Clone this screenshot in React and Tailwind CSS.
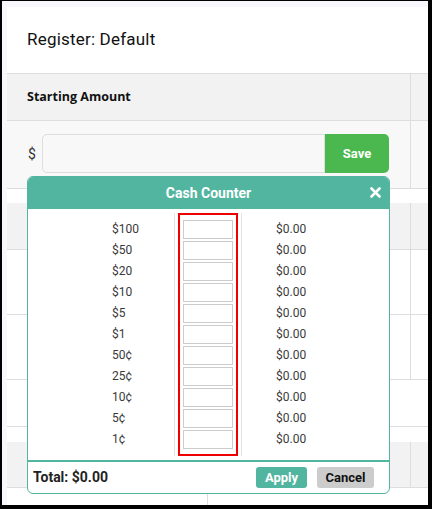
import React from 'react';

const denominations = ['$100', '$50', '$20', '$10', '$5', '$1', '50¢', '25¢', '10¢', '5¢', '1¢'];

function TableRow({ className = '', children, right = true }) {
  return (
    <div className={`flex border-b border-[#dddddd] ${className}`}>
      <div className="w-[403px] flex items-center">{children}</div>
      {right && <div className="w-px bg-[#dddddd]" />}
      <div className="flex-1" />
    </div>
  );
}

function CashCounter() {
  return (
    <div className="absolute left-[25px] top-[175px] w-[363px] h-[318px] flex flex-col rounded-[6px] border border-[#52b5a0] bg-white overflow-hidden">
      {/* header */}
      <div className="relative h-[32px] shrink-0 bg-[#52b5a0] flex items-center justify-center">
        <span className="text-white text-[14px] font-bold">Cash Counter</span>
        <svg className="absolute right-[8px] top-[10px]" width="11" height="11" viewBox="0 0 11 11">
          <path d="M1.5 1.5 L9.5 9.5 M9.5 1.5 L1.5 9.5" stroke="white" strokeWidth="2.6" strokeLinecap="round" />
        </svg>
      </div>

      {/* body */}
      <div className="grid grid-cols-[146px_68px_1fr] pt-[4px] pb-[4px]">
        <div className="pt-[7px] pl-[84px] flex flex-col">
          {denominations.map((d) => (
            <div key={d} className="h-[21px] leading-[19px] text-[12px] text-[#3a3a3a]">{d}</div>
          ))}
        </div>
        <div className="border-l border-r border-[#e2e2e2] px-[3px]">
          <div className="border-2 border-[#ee0000] pt-[5px] pb-[5px] px-[3px] flex flex-col gap-[2px]">
            {denominations.map((d) => (
              <input
                key={d}
                type="text"
                className="w-[50px] h-[19px] border border-[#cccccc] bg-white outline-none"
              />
            ))}
          </div>
        </div>
        <div className="pt-[7px] pl-[34px] flex flex-col">
          {denominations.map((d) => (
            <div key={d} className="h-[21px] leading-[19px] text-[12px] text-[#3a3a3a]">$0.00</div>
          ))}
        </div>
      </div>

      {/* footer */}
      <div className="flex-1 border-t-2 border-[#52b5a0] flex items-center pl-[5px] pr-[15px]">
        <span className="text-[14px] font-bold text-[#222222]">Total: $0.00</span>
        <div className="ml-auto flex items-center gap-[10px]">
          <button className="w-[51px] h-[21px] rounded-[3px] bg-[#52b5a0] text-white text-[13px] font-bold">Apply</button>
          <button className="w-[57px] h-[21px] rounded-[3px] bg-[#cccccc] text-[#111111] text-[13px] font-bold">Cancel</button>
        </div>
      </div>
    </div>
  );
}

export default function App() {
  return (
    <div
      className="w-[432px] h-[509px] bg-black pl-[2px] pt-[1px] pr-[4px] pb-[4px] overflow-hidden"
      style={{ fontFamily: 'Roboto, "Liberation Sans", sans-serif' }}
    >
      <div className="relative h-full bg-[#f7f7fc] pl-[5px] pt-[6px]">
        <div className="h-full bg-white overflow-hidden flex flex-col">
          {/* page title */}
          <div className="h-[67px] shrink-0 border-b border-[#dddddd] flex items-center pl-[20px]">
            <h1 className="text-[17px] text-[#111111] tracking-[0.2px]">Register: Default</h1>
          </div>

          {/* starting amount table */}
          <TableRow className="h-[47px] shrink-0 bg-[#f2f2f2]">
            <span className="pl-[20px] text-[12.5px] font-bold text-[#111111]" style={{ fontFamily: '"Open Sans", sans-serif' }}>
              Starting Amount
            </span>
          </TableRow>
          <TableRow className="h-[68px] shrink-0 bg-[#f8f8f8]">
            <div className="flex items-start pl-[21px] h-full pt-[13px]">
              <span className="text-[14px] text-[#333333] mt-[10px] w-[14px]">$</span>
              <div className="flex h-[39px]">
                <input
                  type="text"
                  className="w-[283px] h-full rounded-l-[5px] border border-[#dddddd] bg-[#f8f8f8] outline-none"
                />
                <button className="w-[64px] h-full rounded-r-[5px] bg-[#4ab84e] text-white text-[13px] font-bold">Save</button>
              </div>
            </div>
          </TableRow>

          <div className="h-[14px] shrink-0" />

          {/* second table */}
          <TableRow className="h-[47px] shrink-0 bg-[#f2f2f2]" />
          <TableRow className="h-[65px] shrink-0" />
          <TableRow className="h-[65px] shrink-0" />
          <TableRow className="h-[47px] shrink-0" right={false} />

          <div className="h-[15px] shrink-0" />

          {/* third table */}
          <TableRow className="h-[46px] shrink-0 bg-[#f2f2f2]" />
          <div className="flex h-[40px] shrink-0">
            <div className="w-[201px] border-r border-[#dddddd] pl-[21px] pt-[13px] text-[13px] text-[#2a6fb0]">Line Items</div>
            <div className="pl-[22px] pt-[13px] text-[13px] text-[#333333]">Amount</div>
          </div>
        </div>
        <CashCounter />
      </div>
    </div>
  );
}
